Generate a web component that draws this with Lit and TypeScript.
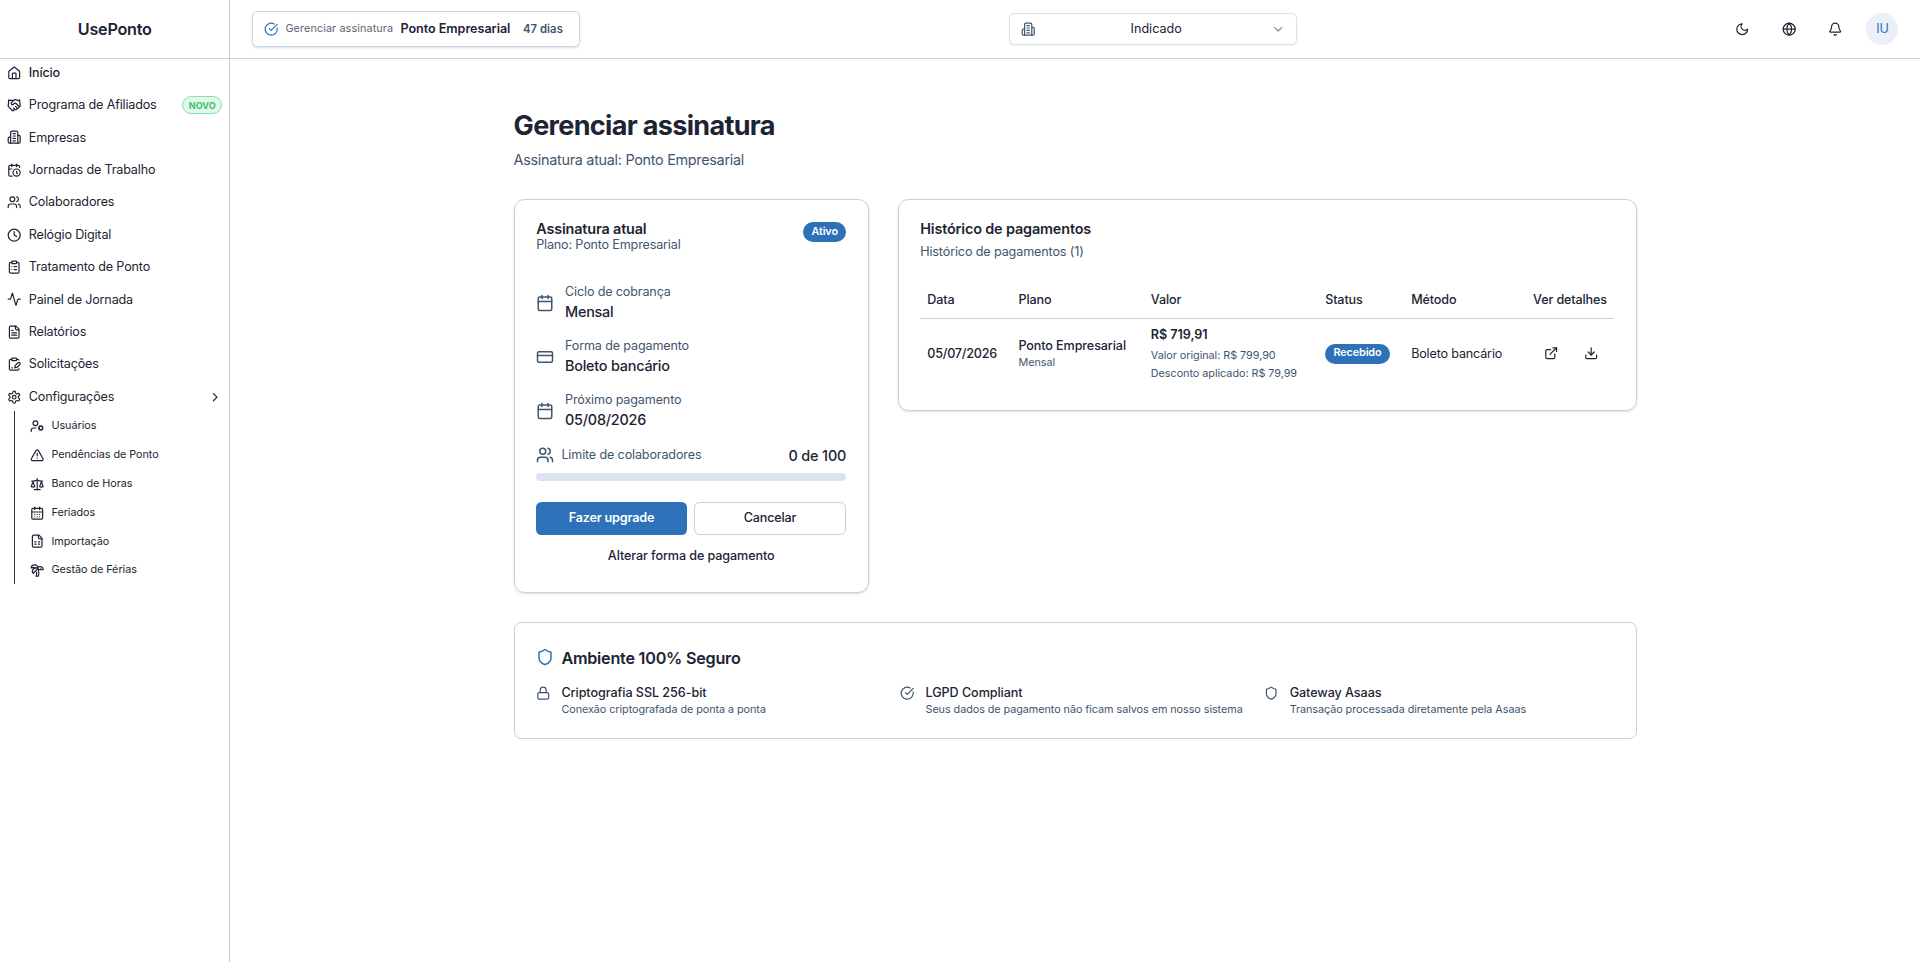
import { LitElement, html, css, svg, unsafeCSS } from "lit";
import { customElement } from "lit/decorators.js";

const icons: Record<string, any> = {
  home: svg`<path d="M15 21v-8a1 1 0 0 0-1-1h-4a1 1 0 0 0-1 1v8"/><path d="M3 10a2 2 0 0 1 .709-1.528l7-5.999a2 2 0 0 1 2.582 0l7 5.999A2 2 0 0 1 21 10v9a2 2 0 0 1-2 2H5a2 2 0 0 1-2-2z"/>`,
  handshake: svg`<path d="m11 17 2 2a1 1 0 1 0 3-3"/><path d="m14 14 2.5 2.5a1 1 0 1 0 3-3l-3.88-3.88a3 3 0 0 0-4.24 0l-.88.88a1 1 0 1 1-3-3l2.81-2.81a5.79 5.79 0 0 1 7.06-.87l.47.28a2 2 0 0 0 1.42.25L21 4"/><path d="m21 3 1 11h-2"/><path d="M3 3 2 14l6.5 6.5a1 1 0 1 0 3-3"/><path d="M3 4h8"/>`,
  building: svg`<path d="M6 22V4a2 2 0 0 1 2-2h8a2 2 0 0 1 2 2v18Z"/><path d="M6 12H4a2 2 0 0 0-2 2v6a2 2 0 0 0 2 2h2"/><path d="M18 9h2a2 2 0 0 1 2 2v9a2 2 0 0 1-2 2h-2"/><path d="M10 6h4"/><path d="M10 10h4"/><path d="M10 14h4"/><path d="M10 18h4"/>`,
  calendarClock: svg`<path d="M21 7.5V6a2 2 0 0 0-2-2H5a2 2 0 0 0-2 2v14a2 2 0 0 0 2 2h3.5"/><path d="M16 2v4"/><path d="M8 2v4"/><path d="M3 10h5"/><path d="M17.5 17.5 16 16.3V14"/><circle cx="16" cy="16" r="6"/>`,
  users: svg`<path d="M16 21v-2a4 4 0 0 0-4-4H6a4 4 0 0 0-4 4v2"/><circle cx="9" cy="7" r="4"/><path d="M22 21v-2a4 4 0 0 0-3-3.87"/><path d="M16 3.13a4 4 0 0 1 0 7.75"/>`,
  clock: svg`<circle cx="12" cy="12" r="10"/><path d="M12 6v6l4 2"/>`,
  clipboardList: svg`<rect width="8" height="4" x="8" y="2" rx="1"/><path d="M16 4h2a2 2 0 0 1 2 2v14a2 2 0 0 1-2 2H6a2 2 0 0 1-2-2V6a2 2 0 0 1 2-2h2"/><path d="M12 11h4"/><path d="M12 16h4"/><path d="M8 11h.01"/><path d="M8 16h.01"/>`,
  activity: svg`<path d="M22 12h-2.48a2 2 0 0 0-1.93 1.46l-2.35 8.36a.25.25 0 0 1-.48 0L9.24 2.18a.25.25 0 0 0-.48 0l-2.35 8.36A2 2 0 0 1 4.49 12H2"/>`,
  file: svg`<path d="M15 2H6a2 2 0 0 0-2 2v16a2 2 0 0 0 2 2h12a2 2 0 0 0 2-2V7Z"/><path d="M14 2v4a2 2 0 0 0 2 2h4"/><path d="M10 9H8"/><path d="M16 13H8"/><path d="M16 17H8"/>`,
  clipboardPen: svg`<rect width="8" height="4" x="8" y="2" rx="1"/><path d="M8 4H6a2 2 0 0 0-2 2v14a2 2 0 0 0 2 2h12a2 2 0 0 0 2-2v-.5"/><path d="M16 4h2a2 2 0 0 1 1.73 1"/><path d="M8 18h1"/><path d="M21.378 12.626a1 1 0 0 0-3.004-3.004l-4.01 4.012a2 2 0 0 0-.506.854l-.837 2.87a.5.5 0 0 0 .62.62l2.87-.837a2 2 0 0 0 .854-.506z"/>`,
  settings: svg`<path d="M12.22 2h-.44a2 2 0 0 0-2 2v.18a2 2 0 0 1-1 1.73l-.43.25a2 2 0 0 1-2 0l-.15-.08a2 2 0 0 0-2.73.73l-.22.38a2 2 0 0 0 .73 2.73l.15.1a2 2 0 0 1 1 1.72v.51a2 2 0 0 1-1 1.74l-.15.09a2 2 0 0 0-.73 2.73l.22.38a2 2 0 0 0 2.73.73l.15-.08a2 2 0 0 1 2 0l.43.25a2 2 0 0 1 1 1.73V20a2 2 0 0 0 2 2h.44a2 2 0 0 0 2-2v-.18a2 2 0 0 1 1-1.73l.43-.25a2 2 0 0 1 2 0l.15.08a2 2 0 0 0 2.73-.73l.22-.39a2 2 0 0 0-.73-2.73l-.15-.08a2 2 0 0 1-1-1.74v-.5a2 2 0 0 1 1-1.74l.15-.09a2 2 0 0 0 .73-2.73l-.22-.38a2 2 0 0 0-2.73-.73l-.15.08a2 2 0 0 1-2 0l-.43-.25a2 2 0 0 1-1-1.73V4a2 2 0 0 0-2-2z"/><circle cx="12" cy="12" r="3"/>`,
  chevronRight: svg`<path d="m9 18 6-6-6-6"/>`,
  chevronDown: svg`<path d="m6 9 6 6 6-6"/>`,
  userCog: svg`<circle cx="18" cy="15" r="3"/><circle cx="9" cy="7" r="4"/><path d="M10 15H6a4 4 0 0 0-4 4v2"/><path d="m21.7 16.4-.9-.3"/><path d="m15.2 13.9-.9-.3"/><path d="m16.6 18.7.3-.9"/><path d="m19.1 12.2.3-.9"/><path d="m19.6 18.7-.4-1"/><path d="m16.8 12.3-.4-1"/><path d="m14.3 16.6 1-.4"/><path d="m20.7 13.8 1-.4"/>`,
  alert: svg`<path d="m21.73 18-8-14a2 2 0 0 0-3.48 0l-8 14A2 2 0 0 0 4 21h16a2 2 0 0 0 1.73-3"/><path d="M12 9v4"/><path d="M12 17h.01"/>`,
  scale: svg`<path d="m16 16 3-8 3 8c-.87.65-1.92 1-3 1s-2.13-.35-3-1Z"/><path d="m2 16 3-8 3 8c-.87.65-1.92 1-3 1s-2.13-.35-3-1Z"/><path d="M7 21h10"/><path d="M12 3v18"/><path d="M3 7h2c2 0 5-1 7-2 2 1 5 2 7 2h2"/>`,
  calendarDays: svg`<path d="M8 2v4"/><path d="M16 2v4"/><rect width="18" height="18" x="3" y="4" rx="2"/><path d="M3 10h18"/><path d="M8 14h.01"/><path d="M12 14h.01"/><path d="M16 14h.01"/><path d="M8 18h.01"/><path d="M12 18h.01"/><path d="M16 18h.01"/>`,
  sheet: svg`<path d="M15 2H6a2 2 0 0 0-2 2v16a2 2 0 0 0 2 2h12a2 2 0 0 0 2-2V7Z"/><path d="M14 2v4a2 2 0 0 0 2 2h4"/><path d="M8 13h2"/><path d="M14 13h2"/><path d="M8 17h2"/><path d="M14 17h2"/>`,
  palm: svg`<path d="M13 8c0-2.76-2.46-5-5.5-5S2 5.24 2 8h2l1-1 1 1h4"/><path d="M13 7.14A5.82 5.82 0 0 1 16.5 6c3.04 0 5.5 2.24 5.5 5h-3l-1-1-1 1h-3"/><path d="M5.89 9.71c-2.15 2.15-2.3 5.47-.35 7.43l4.24-4.25.7-.7.71-.71 2.12-2.12c-1.95-1.96-5.27-1.8-7.42.35"/><path d="M11 15.5c.5 2.5-.17 4.5-1 6.5h4c2-5.5-.5-12-1-14"/>`,
  check: svg`<path d="M21.801 10A10 10 0 1 1 17 3.335"/><path d="m9 11 3 3L22 4"/>`,
  moon: svg`<path d="M12 3a6 6 0 0 0 9 9 9 9 0 1 1-9-9Z"/>`,
  globe: svg`<circle cx="12" cy="12" r="10"/><path d="M12 2a14.5 14.5 0 0 0 0 20 14.5 14.5 0 0 0 0-20"/><path d="M2 12h20"/>`,
  bell: svg`<path d="M10.268 21a2 2 0 0 0 3.464 0"/><path d="M3.262 15.326A1 1 0 0 0 4 17h16a1 1 0 0 0 .74-1.673C19.41 13.956 18 12.499 18 8A6 6 0 0 0 6 8c0 4.499-1.411 5.956-2.738 7.326"/>`,
  calendar: svg`<path d="M8 2v4"/><path d="M16 2v4"/><rect width="18" height="18" x="3" y="4" rx="2"/><path d="M3 10h18"/>`,
  card: svg`<rect width="20" height="14" x="2" y="5" rx="2"/><path d="M2 10h20"/>`,
  external: svg`<path d="M15 3h6v6"/><path d="M10 14 21 3"/><path d="M18 13v6a2 2 0 0 1-2 2H5a2 2 0 0 1-2-2V8a2 2 0 0 1 2-2h6"/>`,
  download: svg`<path d="M21 15v4a2 2 0 0 1-2 2H5a2 2 0 0 1-2-2v-4"/><path d="m7 10 5 5 5-5"/><path d="M12 15V3"/>`,
  shield: svg`<path d="M20 13c0 5-3.5 7.5-7.66 8.95a1 1 0 0 1-.67-.01C7.5 20.5 4 18 4 13V6a1 1 0 0 1 1-1c2 0 4.5-1.2 6.24-2.72a1.17 1.17 0 0 1 1.52 0C14.51 3.81 17 5 19 5a1 1 0 0 1 1 1z"/>`,
  lock: svg`<rect width="18" height="11" x="3" y="11" rx="2"/><path d="M7 11V7a5 5 0 0 1 10 0v4"/>`,
};

const icon = (name: string, size = 14.4) =>
  html`<svg class="icon" width=${size} height=${size} viewBox="0 0 24 24" fill="none" stroke="currentColor" stroke-width="2" stroke-linecap="round" stroke-linejoin="round">${icons[name]}</svg>`;

const shared = css`
  :host {
    --fg: #1d2433;
    --muted: #41566e;
    --border: #c3d0e0;
    --primary: #2d72b8;
    box-sizing: border-box;
    font-family: Inter, "Liberation Sans", sans-serif;
    letter-spacing: -.17px;
    color: var(--fg);
  }
  *, *::before, *::after { box-sizing: border-box; }
  .icon { display: block; flex: none; }
  h1, h2, h3, p, ul { margin: 0; padding: 0; }
  ul { list-style: none; }
  button { font: inherit; color: inherit; background: none; border: 0; padding: 0; margin: 0; letter-spacing: inherit; }
  .badge {
    display: inline-flex; align-items: center; height: 20px; padding: 0 8.3px; border-radius: 10px;
    background: var(--primary); color: #fff; font-size: 10.8px; line-height: 14.4px; font-weight: 600; letter-spacing: -.1px;
  }
`;

const NAV = [
  ["home", "Início"], ["handshake", "Programa de Afiliados"], ["building", "Empresas"],
  ["calendarClock", "Jornadas de Trabalho"], ["users", "Colaboradores"], ["clock", "Relógio Digital"],
  ["clipboardList", "Tratamento de Ponto"], ["activity", "Painel de Jornada"], ["file", "Relatórios"],
  ["clipboardPen", "Solicitações"], ["settings", "Configurações"],
];
const SUB = [
  ["userCog", "Usuários"], ["alert", "Pendências de Ponto"], ["scale", "Banco de Horas"],
  ["calendarDays", "Feriados"], ["sheet", "Importação"], ["palm", "Gestão de Férias"],
];

@customElement("app-sidebar")
class AppSidebar extends LitElement {
  static styles = [shared, css`
    :host { display: block; width: 230.4px; flex: none; border-right: 1px solid var(--border); }
    .brand {
      height: 58.6px; border-bottom: 1px solid var(--border); display: flex; align-items: center; justify-content: center;
      font-size: 16.2px; font-weight: 600; padding-top: 1px; letter-spacing: -.25px;
    }
    .nav { display: flex; flex-direction: column; gap: 3.6px; margin-top: -.15px; }
    .item { height: 28.8px; display: flex; align-items: center; gap: 7.2px; padding: 0 7.2px; font-size: 12.6px; line-height: 18px; }
    .current { font-weight: 500; }
    .label { flex: 1; white-space: nowrap; }
    .new {
      border: 1px solid #8ae0aa; background: #e2f8ea; color: #35c466; border-radius: 9px; height: 18px;
      padding: 1px 5.4px 0; font-size: 9px; line-height: 16px; font-weight: 700; letter-spacing: .1px;
    }
    .sub { margin-left: 14px; border-left: 1px solid #262f3f; padding: 2.7px 0 .9px 8px; display: flex; flex-direction: column; gap: 3.6px; }
    .sub .item { height: 25.2px; font-size: 10.8px; letter-spacing: -.04px; gap: 6.9px; }
  `];
  render() {
    return html`
      <div class="brand">UsePonto</div>
      <ul class="nav">
        ${NAV.map(([i, t], n) => html`<li class="item ${n === 0 ? "current" : ""}">${icon(i)}<span class="label">${t}</span>
          ${t === "Programa de Afiliados" ? html`<span class="new">NOVO</span>` : ""}
          ${t === "Configurações" ? icon("chevronRight") : ""}</li>`)}
      </ul>
      <ul class="sub">${SUB.map(([i, t]) => html`<li class="item">${icon(i)}<span class="label">${t}</span></li>`)}</ul>`;
  }
}

@customElement("app-topbar")
class AppTopbar extends LitElement {
  static styles = [shared, css`
    :host { display: flex; align-items: center; justify-content: space-between; height: 58.6px; border-bottom: 1px solid var(--border); padding: 0 21.6px; }
    .plan {
      height: 36px; width: 328px; display: flex; align-items: center; padding: 0 11px; border: 1px solid #c5d5ec; border-radius: 5.4px;
      box-shadow: 0 1px 3px rgba(0,0,0,.1), 0 1px 2px -1px rgba(0,0,0,.1); white-space: nowrap;
    }
    .plan .icon { color: var(--primary); }
    .lead { font-size: 10.8px; color: #5d6472; margin-left: 7px; letter-spacing: .12px; }
    .name { font-size: 12.6px; font-weight: 600; margin-left: 7.2px; letter-spacing: -.04px; }
    .days { font-size: 11.3px; font-weight: 600; color: var(--muted); margin-left: 12.6px; letter-spacing: .05px; }
    .select {
      height: 32px; width: 288px; display: flex; align-items: center; padding: 0 10.8px; border: 1px solid #d5e0ec; border-radius: 5.4px;
      box-shadow: 0 1px 2px rgba(0,0,0,.05); font-size: 12.6px; margin-left: 6px; letter-spacing: 0;
    }
    .select span { flex: 1; text-align: center; padding-left: 7px; }
    .bld { color: var(--muted); display: flex; }
    .chev { opacity: .5; display: flex; }
    .tools { display: flex; align-items: center; }
    .tool { width: 46.4px; display: flex; justify-content: center; }
    .avatar { width: 32px; height: 32px; margin-left: 7.8px; border-radius: 50%; background: #eaf0f8; color: var(--primary); display: flex; align-items: center; justify-content: center; font-size: 12.6px; }
  `];
  render() {
    return html`
      <button class="plan">${icon("check")}<span class="lead">Gerenciar assinatura</span><span class="name">Ponto Empresarial</span><span class="days">47 dias</span></button>
      <button class="select"><div class="bld">${icon("building")}</div><span>Indicado</span><div class="chev">${icon("chevronDown")}</div></button>
      <div class="tools">
        <div class="tool">${icon("moon")}</div><div class="tool">${icon("globe")}</div><div class="tool">${icon("bell")}</div>
        <div class="avatar">IU</div>
      </div>`;
  }
}

const cardCss = `
  .card { border: 1px solid var(--border); border-radius: 10.8px; padding: 21.6px; box-shadow: 0 1px 3px rgba(0,0,0,.1), 0 1px 2px -1px rgba(0,0,0,.1); }
  .title { font-size: 14.4px; line-height: 14.4px; font-weight: 600; padding-top: 1px; margin-bottom: -1px; letter-spacing: -.14px; }
  .desc { font-size: 12.6px; line-height: 18px; color: var(--muted); }
`;

@customElement("plan-card")
class PlanCard extends LitElement {
  static styles = [shared, unsafeCSS(cardCss), css`
    :host { display: block; }
    .head { display: flex; justify-content: space-between; align-items: flex-start; }
    .badge { margin-top: .6px; }
    .facts { display: flex; flex-direction: column; gap: 14.4px; margin-top: 29.6px; }
    .fact { display: flex; align-items: center; gap: 10.8px; height: 39.6px; color: var(--muted); }
    .k { font-size: 12.6px; line-height: 18px; letter-spacing: -.15px; }
    .v { font-size: 14.4px; line-height: 21.6px; font-weight: 500; color: var(--fg); }
    .fact .v { letter-spacing: -.22px; }
    .limit .v { letter-spacing: -.14px; }
    .limit { display: flex; justify-content: space-between; align-items: flex-start; margin-top: 14.4px; color: var(--muted); }
    .left { display: flex; align-items: center; gap: 7.2px; padding-top: .5px; }
    .bar { height: 8px; border-radius: 4px; background: #dae4f1; margin-top: 6px; }
    .actions { display: grid; grid-template-columns: 150.5px 1fr; gap: 7.2px; margin-top: 21.2px; font-size: 12.6px; }
    .btn { height: 32.6px; border-radius: 5.4px; font-weight: 500; padding-bottom: 1.6px; }
    .primary { background: var(--primary); color: #fff; font-weight: 600; }
    .outline { border: 1px solid var(--border); }
    .ghost { height: 28.8px; width: 100%; margin-top: 7.2px; padding-bottom: 1.2px; font-size: 12.6px; font-weight: 500; letter-spacing: -.1px; }
  `];
  render() {
    const facts = [["calendar", "Ciclo de cobrança", "Mensal"], ["card", "Forma de pagamento", "Boleto bancário"], ["calendar", "Próximo pagamento", "05/08/2026"]];
    return html`<section class="card">
      <div class="head"><div><h2 class="title">Assinatura atual</h2><p class="desc">Plano: Ponto Empresarial</p></div><span class="badge">Ativo</span></div>
      <div class="facts">${facts.map(([i, k, v]) => html`<div class="fact">${icon(i, 18)}<div><p class="k">${k}</p><p class="v">${v}</p></div></div>`)}</div>
      <div class="limit"><div class="left">${icon("users", 18)}<span class="k">Limite de colaboradores</span></div><span class="v">0 de 100</span></div>
      <div class="bar"></div>
      <div class="actions"><button class="btn primary">Fazer upgrade</button><button class="btn outline">Cancelar</button></div>
      <button class="ghost">Alterar forma de pagamento</button>
    </section>`;
  }
}

@customElement("history-card")
class HistoryCard extends LitElement {
  static styles = [shared, unsafeCSS(cardCss), css`
    :host { display: block; }
    .desc { margin-top: 7.6px; letter-spacing: -.13px; }
    .row { display: grid; grid-template-columns: 91.1px 132.4px 174.3px 86px 1fr 110px; align-items: center; font-size: 12.6px; line-height: 18px; white-space: nowrap; }
    .row > * { padding-left: 7.2px; }
    .header { height: 36.6px; margin-top: 20.8px; font-weight: 500; border-bottom: 1px solid var(--border); letter-spacing: -.13px; }
    .end { text-align: right; padding-right: 7.2px; }
    .body { padding: 7.2px 0 7px; }
    .medium { font-weight: 500; letter-spacing: -.11px; }
    .date { font-weight: 500; letter-spacing: -.24px; }
    .bold { font-weight: 600; letter-spacing: -.05px; }
    .small { font-size: 10.8px; line-height: 14.4px; color: var(--muted); letter-spacing: -.03px; padding-top: 1px; margin-bottom: -1px; }
    .gap { margin-top: 4px; }
    .gap + .gap { margin-top: 4.6px; padding-top: .4px; margin-bottom: -.4px; }
    .status { display: flex; }
    .acts { display: flex; justify-content: flex-end; gap: 7.2px; padding-right: 7.2px; }
    .act { width: 32.4px; display: flex; justify-content: center; }
  `];
  render() {
    return html`<section class="card">
      <h2 class="title">Histórico de pagamentos</h2><p class="desc">Histórico de pagamentos (1)</p>
      <div class="row header"><span>Data</span><span>Plano</span><span>Valor</span><span>Status</span><span>Método</span><span class="end">Ver detalhes</span></div>
      <div class="row body">
        <span class="date">05/07/2026</span>
        <div><p class="medium">Ponto Empresarial</p><p class="small">Mensal</p></div>
        <div><p class="bold">R$ 719,91</p><p class="small gap">Valor original: R$ 799,90</p><p class="small gap">Desconto aplicado: R$ 79,99</p></div>
        <div class="status"><span class="badge">Recebido</span></div>
        <span>Boleto bancário</span>
        <div class="acts"><button class="act">${icon("external")}</button><button class="act">${icon("download")}</button></div>
      </div>
    </section>`;
  }
}

@customElement("security-card")
class SecurityCard extends LitElement {
  static styles = [shared, unsafeCSS(cardCss), css`
    :host { display: block; }
    .card { border-radius: 7.2px; box-shadow: none; }
    .head { display: flex; align-items: center; gap: 7.2px; height: 25.2px; color: var(--primary); }
    .h { font-size: 16.2px; line-height: 25.2px; font-weight: 600; color: var(--fg); padding-top: 2px; letter-spacing: -.24px; }
    .grid { display: grid; grid-template-columns: repeat(3, 1fr); gap: 14.4px; margin-top: 14.4px; }
    .feat { display: flex; gap: 10.8px; white-space: nowrap; color: var(--muted); }
    .ic { padding-top: 1.8px; }
    .t { font-size: 12.6px; line-height: 18px; font-weight: 500; color: var(--fg); letter-spacing: -.06px; }
    .s { font-size: 10.8px; line-height: 14.4px; letter-spacing: -.05px; padding-top: 1px; margin-bottom: -1px; }
  `];
  render() {
    const f = [["lock", "Criptografia SSL 256-bit", "Conexão criptografada de ponta a ponta"], ["check", "LGPD Compliant", "Seus dados de pagamento não ficam salvos em nosso sistema"], ["shield", "Gateway Asaas", "Transação processada diretamente pela Asaas"]];
    return html`<section class="card">
      <div class="head">${icon("shield", 18)}<h3 class="h">Ambiente 100% Seguro</h3></div>
      <div class="grid">${f.map(([i, t, s]) => html`<div class="feat"><div class="ic">${icon(i)}</div><div><p class="t">${t}</p><p class="s">${s}</p></div></div>`)}</div>
    </section>`;
  }
}

@customElement("app-root")
class AppRoot extends LitElement {
  static styles = [shared, css`
    :host { display: flex; width: 100%; height: 100vh; background: #fff; overflow: hidden; }
    .main { flex: 1; min-width: 0; }
    .page { width: 1123.2px; margin: 0 auto; padding-top: 51.2px; }
    .h1 { font-size: 27px; line-height: 32.4px; font-weight: 700; letter-spacing: -.67px; }
    .lead { font-size: 14.4px; line-height: 21.6px; color: var(--muted); margin-top: 7.2px; letter-spacing: -.29px; }
    .cards { display: grid; grid-template-columns: 355.2px 739.2px; gap: 28.8px; align-items: start; margin: 27.8px 0 28.8px; }
  `];
  render() {
    return html`<app-sidebar></app-sidebar>
      <div class="main"><app-topbar></app-topbar>
        <div class="page">
          <h1 class="h1">Gerenciar assinatura</h1><p class="lead">Assinatura atual: Ponto Empresarial</p>
          <div class="cards"><plan-card></plan-card><history-card></history-card></div>
          <security-card></security-card>
        </div>
      </div>`;
  }
}
